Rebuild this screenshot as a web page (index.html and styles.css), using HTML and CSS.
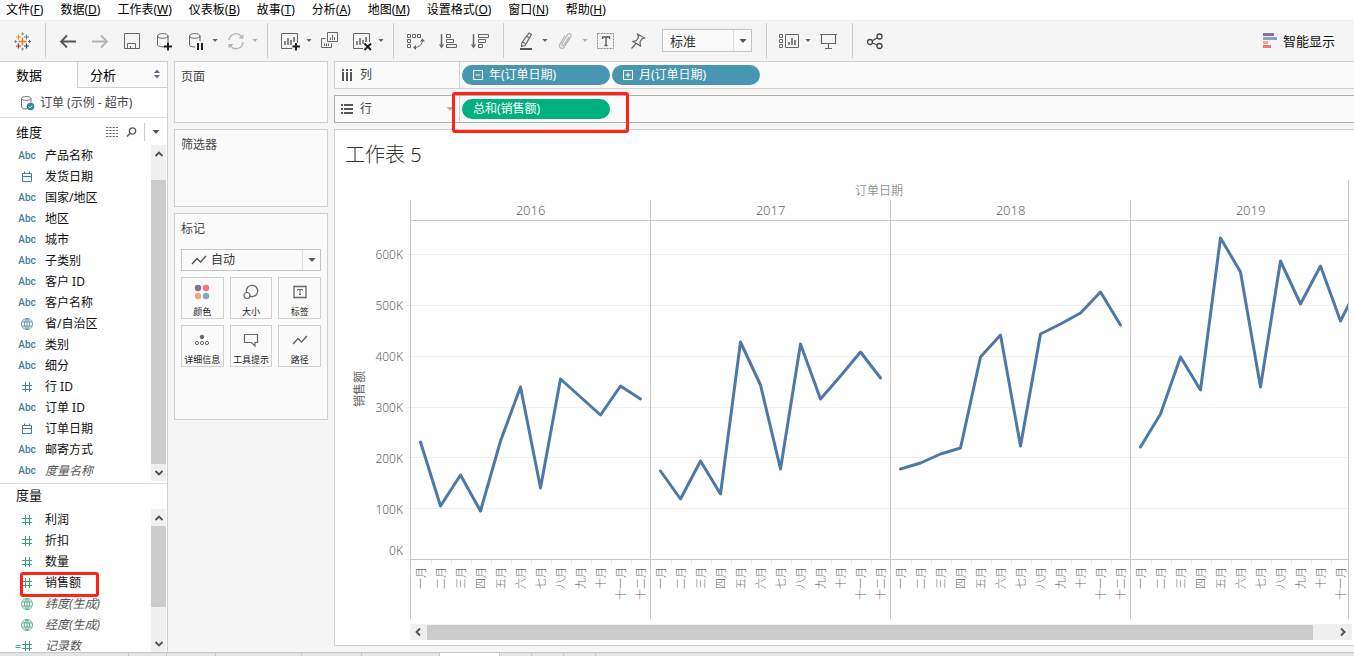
FILE: index.html
```html
<!DOCTYPE html>
<html lang="zh-CN">
<head>
<meta charset="utf-8">
<title>工作表 5</title>
<link rel="stylesheet" href="styles.css">
</head>
<body>
<svg class="defs" aria-hidden="true">
  <symbol id="cal" viewBox="0 0 14 14"><path d="M2.5 3.5h9v8h-9zM2.5 6.5h9M4.500 1.500v2M9.500 1.500v2" fill="none" stroke="currentColor"/></symbol>
  <symbol id="hash" viewBox="0 0 14 14"><path d="M5.500 2v10M9.500 2v10M2 5.500h10M2 9.500h10" fill="none" stroke="currentColor"/></symbol>
  <symbol id="globe" viewBox="0 0 14 14"><path d="M7 1.500a5.500 5.500 0 1 0 .01 0zM7 1.500c-3.500 3-3.500 8 0 11M7 1.500c3.500 3 3.500 8 0 11M7 1.500v11M2 5h10M2 9h10" fill="none" stroke="currentColor" stroke-width=".8"/></symbol>
  <symbol id="trend" viewBox="0 0 16 12"><path d="M1 10l5-5.500 3.500 3.500L15 2" fill="none" stroke="currentColor" stroke-width="1.400"/></symbol>
  <symbol id="up" viewBox="0 0 10 8"><path d="M1.500 6L5 2.500 8.500 6" fill="none" stroke="#505050" stroke-width="1.800"/></symbol>
  <symbol id="down" viewBox="0 0 10 8"><path d="M1.500 2L5 5.500 8.500 2" fill="none" stroke="#505050" stroke-width="1.800"/></symbol>
  <symbol id="caret" viewBox="0 0 8 6"><path d="M.5 1h7L4 5z" fill="currentColor"/></symbol>
</svg>

<nav class="menubar">
  <button>文件(<u>F</u>)</button><button>数据(<u>D</u>)</button><button>工作表(<u>W</u>)</button><button>仪表板(<u>B</u>)</button><button>故事(<u>T</u>)</button><button>分析(<u>A</u>)</button><button>地图(<u>M</u>)</button><button>设置格式(<u>O</u>)</button><button>窗口(<u>N</u>)</button><button>帮助(<u>H</u>)</button>
</nav>

<div class="toolbar" role="toolbar">
  <div class="group brand">
    <button class="tool" aria-label="起始页"><svg viewBox="0 0 20 20" fill="none">
      <path d="M10.500 6.500v8M6.500 10.500h8" stroke="#e8762d" stroke-width="1.500"/>
      <path d="M6.500 3.500v5M4 6h5" stroke="#eb9129" stroke-width="1.200"/><path d="M14.500 3.500v5M12 6h5" stroke="#5b879b" stroke-width="1.200"/>
      <path d="M6.500 12.500v5M4 15h5" stroke="#c72035" stroke-width="1.200"/><path d="M14.500 12.500v5M12 15h5" stroke="#1f447e" stroke-width="1.200"/>
      <path d="M10.500 1.500v3M9 3h3M10.500 16.500v3M9 18h3M3.500 9v3M2 10.500h3" stroke="#7199a6"/><path d="M17.500 9v3M16 10.500h3" stroke="#5c6692"/>
    </svg></button>
  </div>
  <div class="group">
    <button class="tool" aria-label="撤消"><svg viewBox="0 0 20 20"><path d="M18 10.500H3M9 4.500l-6 6 6 6" fill="none" stroke="#555" stroke-width="1.800"/></svg></button>
    <button class="tool faded" aria-label="重做"><svg viewBox="0 0 20 20"><path d="M2 10.500h15M11 4.500l6 6-6 6" fill="none" stroke="currentColor" stroke-width="1.800"/></svg></button>
    <button class="tool" aria-label="保存"><svg viewBox="0 0 20 20"><path d="M2.500 2.500h15v15h-15zM5.500 17.500v-5h8v5M8.500 15v2.500" fill="none" stroke="currentColor"/></svg></button>
    <button class="tool" aria-label="新建数据源"><svg viewBox="0 0 20 20"><path d="M12 15.500c-3.500.8-8.500 0-8.500-1.500V5c0-3.200 10.500-3.200 10.500 0 0 3-10.500 3-10.500 0M14 5v6" fill="none" stroke="currentColor"/><path d="M14 11.500v8M10 15.500h8" stroke="#222" stroke-width="2"/></svg></button>
    <button class="tool" aria-label="暂停自动更新"><svg viewBox="0 0 20 20"><path d="M9 16c-3 0-5.500-.8-5.500-2V5c0-3.200 10.500-3.200 10.500 0 0 3-10.500 3-10.500 0M14 5v5" fill="none" stroke="currentColor"/><path d="M11 12h2v7h-2zM15 12h2v7h-2z" fill="#222"/></svg></button>
    <button class="drop" aria-label="更新选项"><svg><use href="#caret"/></svg></button>
    <button class="tool faded" aria-label="运行更新"><svg viewBox="0 0 20 20"><path d="M3 9a7 7 0 0 1 12.500-3.500M17 11a7 7 0 0 1-12.500 4" fill="none" stroke="currentColor" stroke-width="1.300"/><path d="M12.500 7.500h5V3zM7.500 13h-5v4.500z" fill="currentColor"/></svg></button>
    <button class="drop faded" aria-label="运行选项"><svg><use href="#caret"/></svg></button>
  </div>
  <div class="group">
    <button class="tool" aria-label="新建工作表"><svg viewBox="0 0 20 20"><path d="M12 17.500H1.500v-15h16V12" fill="none" stroke="currentColor"/><path d="M5 14v-4M8 14V7M11 14V9M14 11V6" stroke="currentColor" stroke-width="1.500"/><path d="M16 12v7.500M12.500 15.500h7.500" stroke="#222" stroke-width="2"/></svg></button>
    <button class="drop" aria-label="新建选项"><svg><use href="#caret"/></svg></button>
    <button class="tool" aria-label="复制"><svg viewBox="0 0 20 20"><path d="M7.500 1.500h10v9h-10zM5.500 7.500h-4v9h10v-4" fill="none" stroke="currentColor"/><path d="M10.500 9V6.500M12.500 9V4M14.500 9V6M4.500 15v-2.500M6.500 15v-2.500M8.500 15v-2.500" stroke="currentColor"/></svg></button>
    <button class="tool" aria-label="清除工作表"><svg viewBox="0 0 20 20"><path d="M11 17.500H1.500v-15h16V11" fill="none" stroke="currentColor"/><path d="M5 14v-4M8 14V7M11 13V9M14 11V6" stroke="currentColor" stroke-width="1.500"/><path d="M12.500 12.500l6.500 6.500M19 12.500L12.500 19" stroke="#222" stroke-width="2"/></svg></button>
    <button class="drop" aria-label="清除选项"><svg><use href="#caret"/></svg></button>
  </div>
  <div class="group">
    <button class="tool" aria-label="交换行和列"><svg viewBox="0 0 20 20"><path d="M1.500 3.500h3v3h-3zM6.500 3.500h3v3h-3zM11.500 3.500h3v3h-3zM1.500 8.500h3v3h-3zM1.500 13.500h3v3h-3zM16.500 9c0 4-3 7.500-8 7.500" fill="none" stroke="currentColor"/><path d="M14 10.500l2.500-3 2.500 3zM10 14v5l-3-2.500z" fill="currentColor"/></svg></button>
    <button class="tool" aria-label="升序"><svg viewBox="0 0 20 20"><path d="M3.500 3v12" stroke="currentColor" stroke-width="1.500"/><path d="M1 13.500h5l-2.500 4z" fill="currentColor"/><path d="M8.500 3.500h4v3h-4zM8.500 8.500h7v3h-7zM8.500 13.500h10v3h-10z" fill="none" stroke="currentColor"/></svg></button>
    <button class="tool" aria-label="降序"><svg viewBox="0 0 20 20"><path d="M3.500 3v12" stroke="currentColor" stroke-width="1.500"/><path d="M1 13.500h5l-2.500 4z" fill="currentColor"/><path d="M8.500 3.500h10v3h-10zM8.500 8.500h7v3h-7zM8.500 13.500h4v3h-4z" fill="none" stroke="currentColor"/></svg></button>
  </div>
  <div class="group wide">
    <button class="tool" aria-label="突出显示"><svg viewBox="0 0 20 20"><path d="M13 2l2.500 1.500-6.500 11-3.500 1 .5-4zM6.500 11l2.800 1.500M11 5.500l2.500 1.500" fill="none" stroke="currentColor" stroke-width="1.200"/><path d="M4 18h12" stroke="#555" stroke-width="2"/></svg></button>
    <button class="drop" aria-label="突出显示选项"><svg><use href="#caret"/></svg></button>
    <button class="tool faded" aria-label="分组"><svg viewBox="0 0 20 20"><path d="M13 6l-5 8c-1 1.500-3 .5-2-1.200L11.500 3.800c1.500-2.200 4.500-.5 3.200 1.800L8.500 15.800c-2 3-6.500.8-4.600-2.600L9 4.500" fill="none" stroke="currentColor" stroke-width="1.200"/></svg></button>
    <button class="drop faded" aria-label="分组选项"><svg><use href="#caret"/></svg></button>
    <button class="tool" aria-label="显示标记标签"><svg viewBox="0 0 20 20"><path d="M1.500 2.500h16v15h-16z" fill="none" stroke="#888" stroke-dasharray="2 1"/><path d="M6.500 8V6h7v2M10 6v8M8.500 14.500h3" fill="none" stroke="#555" stroke-width="1.300"/></svg></button>
    <button class="tool" aria-label="固定轴"><svg viewBox="0 0 20 20"><path d="M9.500 3l7 4-2.500.8-2 3.200.5 4-7.500-4.500 3.500-1 2-3.500zM8 12.500l-4.500 5" fill="none" stroke="currentColor" stroke-width="1.200"/></svg></button>
    <div class="combo fit"><select aria-label="适合"><option>标准</option></select><span class="combo-arrow"><svg><use href="#caret"/></svg></span></div>
  </div>
  <div class="group">
    <button class="tool" aria-label="显示/隐藏卡"><svg viewBox="0 0 20 20"><path d="M.5 3.500h3v3h-3zM.5 8.500h3v3h-3zM.5 13.500h3v3h-3zM6.500 3.500h13v13h-13z" fill="none" stroke="currentColor"/><path d="M10 14v-3M13 14V7M16 14V9" stroke="currentColor" stroke-width="1.600"/></svg></button>
    <button class="drop" aria-label="卡选项"><svg><use href="#caret"/></svg></button>
    <button class="tool" aria-label="演示模式"><svg viewBox="0 0 20 20"><path d="M1 3.500h17M2.500 3.500v9h14v-9M9.500 12.500v5M6 17.500h7" fill="none" stroke="currentColor" stroke-width="1.200"/></svg></button>
  </div>
  <div class="group last">
    <button class="tool" aria-label="共享"><svg viewBox="0 0 20 20" fill="none" stroke="#444" stroke-width="1.300"><circle cx="5" cy="11" r="2.500"/><circle cx="14.500" cy="5.500" r="2.500"/><circle cx="14.500" cy="15" r="2.500"/><path d="M7.300 9.800l5-3M7.300 12l5 2"/></svg></button>
  </div>
  <button class="showme"><svg viewBox="0 0 14 16"><path d="M0 0h11v3H0z" fill="#8a7099"/><path d="M0 4h14v3H0z" fill="#83a6cc"/><path d="M0 8h5v3H0z" fill="#f5a67d"/><path d="M0 12h8v3H0z" fill="#fa6e82"/></svg>智能显示</button>
</div>

<main class="workspace">
  <aside class="sidebar">
    <div class="side-tabs">
      <button class="side-tab active">数据</button>
      <button class="side-tab">分析<svg viewBox="0 0 8 10"><path d="M1 4l3-3.500L7 4zM1 6l3 3.500L7 6z" fill="#5f6b7a"/></svg></button>
    </div>
    <div class="source"><svg viewBox="0 0 16 16"><path d="M7 14c-2.800 0-5.500-.6-5.500-2V3.500c0-2.700 9.500-2.700 9.500 0 0 2.500-9.500 2.500-9.500 0M11 3.500v4" fill="none" stroke="#777"/><circle cx="10.500" cy="11.500" r="3.800" fill="#3680a4"/><path d="M8.800 11.500l1.300 1.300 2.200-2.400" fill="none" stroke="#fff"/></svg>订单 (示例 - 超市)</div>
    <div class="section-head">
      <h2>维度</h2>
      <svg class="grid-icon" viewBox="0 0 12 10"><path d="M0 .5h12M0 3.500h12M0 6.500h12M0 9.500h12" stroke="#666" stroke-dasharray="2.300 1"/></svg>
      <svg class="find-icon" viewBox="0 0 12 10"><circle cx="6.500" cy="4" r="3.200" fill="none" stroke="#555" stroke-width="1.200"/><path d="M4 6.500L1 9.500" stroke="#555" stroke-width="1.500"/></svg>
      <button class="section-menu" aria-label="维度菜单"><svg><use href="#caret"/></svg></button>
    </div>
    <div class="field-pane dims">
      <ul class="fields">
        <li><b>Abc</b>产品名称</li>
        <li><svg><use href="#cal"/></svg>发货日期</li>
        <li><b>Abc</b>国家/地区</li>
        <li><b>Abc</b>地区</li>
        <li><b>Abc</b>城市</li>
        <li><b>Abc</b>子类别</li>
        <li><b>Abc</b>客户 ID</li>
        <li><b>Abc</b>客户名称</li>
        <li><svg><use href="#globe"/></svg>省/自治区</li>
        <li><b>Abc</b>类别</li>
        <li><b>Abc</b>细分</li>
        <li><svg><use href="#hash"/></svg>行 ID</li>
        <li><b>Abc</b>订单 ID</li>
        <li><svg><use href="#cal"/></svg>订单日期</li>
        <li><b>Abc</b>邮寄方式</li>
        <li class="generated"><b>Abc</b><i>度量名称</i></li>
      </ul>
      <div class="vscroll"><svg><use href="#up"/></svg><span class="thumb"></span><svg><use href="#down"/></svg></div>
    </div>
    <div class="section-head measure-head"><h2>度量</h2></div>
    <div class="field-pane measures">
      <ul class="fields">
        <li><svg><use href="#hash"/></svg>利润</li>
        <li><svg><use href="#hash"/></svg>折扣</li>
        <li><svg><use href="#hash"/></svg>数量</li>
        <li class="marked"><svg><use href="#hash"/></svg>销售额</li>
        <li class="generated"><svg><use href="#globe"/></svg><i>纬度(生成)</i></li>
        <li class="generated"><svg><use href="#globe"/></svg><i>经度(生成)</i></li>
        <li class="generated calc"><svg><use href="#hash"/></svg><i>记录数</i></li>
      </ul>
      <div class="vscroll"><svg><use href="#up"/></svg><span class="thumb"></span><svg><use href="#down"/></svg></div>
    </div>
  </aside>

  <section class="cards">
    <div class="card pages"><h3>页面</h3></div>
    <div class="card filters"><h3>筛选器</h3></div>
    <div class="card marks">
      <h3>标记</h3>
      <div class="combo mark-type"><svg class="lead"><use href="#trend"/></svg><select aria-label="标记类型"><option>自动</option></select><span class="combo-arrow"><svg><use href="#caret"/></svg></span></div>
      <div class="mark-grid">
        <button><svg viewBox="0 0 16 16"><circle cx="4" cy="4" r="3.200" fill="#8a7099"/><circle cx="12" cy="4" r="3.200" fill="#fa6e82"/><circle cx="4" cy="12" r="3.200" fill="#f5a67d"/><circle cx="12" cy="12" r="3.200" fill="#83a6cc"/></svg>颜色</button>
        <button><svg viewBox="0 0 16 16" fill="#fafafa" stroke="#666" stroke-width="1.200"><circle cx="9" cy="7" r="5.700"/><circle cx="4" cy="11.500" r="3"/></svg>大小</button>
        <button><svg viewBox="0 0 16 16" fill="none" stroke="#666"><path d="M2 2.500h12v11H2z" stroke-width="1.300"/><path d="M5.500 6.500v-1h5v1M8 5.500v5M7 10.500h2"/></svg>标签</button>
        <button><svg viewBox="0 0 16 16" fill="none" stroke="#666"><circle cx="8" cy="5" r="1.800" fill="#666"/><circle cx="3" cy="11" r="1.600"/><circle cx="8" cy="11" r="1.600"/><circle cx="13" cy="11" r="1.600"/></svg>详细信息</button>
        <button><svg viewBox="0 0 16 16"><path d="M1.500 2.500h13v8h-2.500v3.500l-3.500-3.500h-7z" fill="none" stroke="#666" stroke-width="1.200"/></svg>工具提示</button>
        <button><svg><use href="#trend"/></svg>路径</button>
      </div>
    </div>
  </section>

  <section class="canvas">
    <div class="shelf">
      <div class="shelf-label"><svg viewBox="0 0 12 12"><path d="M2 0v2M6 0v2M10 0v2M2 3v9M6 3v9M10 3v9" stroke="#555" stroke-width="2"/></svg>列</div>
      <div class="pills">
        <button class="pill"><svg viewBox="0 0 10 10"><path d="M.5.5h9v9h-9zM2.500 5h5" fill="none" stroke="#fff"/></svg>年(订单日期)</button>
        <button class="pill"><svg viewBox="0 0 10 10"><path d="M.5.5h9v9h-9zM2.500 5h5M5 2.500v5" fill="none" stroke="#fff"/></svg>月(订单日期)</button>
      </div>
    </div>
    <div class="shelf rows">
      <div class="shelf-label"><svg viewBox="0 0 12 12"><path d="M0 2h2M0 6h2M0 10h2M3 2h9M3 6h9M3 10h9" stroke="#555" stroke-width="2"/></svg>行<svg class="shelf-caret"><use href="#caret"/></svg></div>
      <div class="pills marked"><button class="pill measure">总和(销售额)</button></div>
    </div>
    <div class="view">
      <h1>工作表 5</h1>
      <div class="chart">
        <div class="axis">
          <span class="axis-title">销售额</span>
          <div class="axis-labels"><span>600K</span><span>500K</span><span>400K</span><span>300K</span><span>200K</span><span>100K</span><span class="zero">0K</span></div>
          <svg class="axis-ticks" viewBox="0 0 4 339"><path d="M0 33.500h4M0 84.500h4M0 135.500h4M0 186.500h4M0 236.500h4M0 287.500h4M0 338.500h4" stroke="#ececec"/></svg>
        </div>
        <div class="plot">
          <div class="plot-title">订单日期</div>
          <div class="panes">
            <div class="pane">
              <div class="year">2016</div>
              <svg class="lines" viewBox="0 0 239 338"><path class="gl" d="M0 33.500h239M0 84.500h239M0 135.500h239M0 186.500h239M0 236.500h239M0 287.500h239"/><polyline points="9.500,221 29.500,285 49.500,254 69.500,290 89.500,220 109.500,166 129.500,267 149.500,158 169.500,176 189.500,194 209.500,165 229.500,178"/></svg>
              <div class="months"><span>一月</span><span>二月</span><span>三月</span><span>四月</span><span>五月</span><span>六月</span><span>七月</span><span>八月</span><span>九月</span><span>十月</span><span>十一月</span><span>十二月</span></div>
            </div>
            <div class="pane">
              <div class="year">2017</div>
              <svg class="lines" viewBox="0 0 239 338"><path class="gl" d="M0 33.500h239M0 84.500h239M0 135.500h239M0 186.500h239M0 236.500h239M0 287.500h239"/><polyline points="9.500,250 29.500,278 49.500,240 69.500,273 89.500,121 109.500,164 129.500,248 149.500,123 169.500,178 189.500,155 209.500,131 229.500,157"/></svg>
              <div class="months"><span>一月</span><span>二月</span><span>三月</span><span>四月</span><span>五月</span><span>六月</span><span>七月</span><span>八月</span><span>九月</span><span>十月</span><span>十一月</span><span>十二月</span></div>
            </div>
            <div class="pane">
              <div class="year">2018</div>
              <svg class="lines" viewBox="0 0 239 338"><path class="gl" d="M0 33.500h239M0 84.500h239M0 135.500h239M0 186.500h239M0 236.500h239M0 287.500h239"/><polyline points="9.500,248 29.500,242 49.500,233 69.500,227 89.500,136 109.500,114 129.500,225 149.500,113 169.500,103 189.500,92 209.500,71 229.500,104"/></svg>
              <div class="months"><span>一月</span><span>二月</span><span>三月</span><span>四月</span><span>五月</span><span>六月</span><span>七月</span><span>八月</span><span>九月</span><span>十月</span><span>十一月</span><span>十二月</span></div>
            </div>
            <div class="pane">
              <div class="year">2019</div>
              <svg class="lines" viewBox="0 0 239 338"><path class="gl" d="M0 33.500h239M0 84.500h239M0 135.500h239M0 186.500h239M0 236.500h239M0 287.500h239"/><polyline points="9.500,226 29.500,193 49.500,136 69.500,169 89.500,17 109.500,51 129.500,166 149.500,40 169.500,83 189.500,45 209.500,100 229.500,60"/></svg>
              <div class="months"><span>一月</span><span>二月</span><span>三月</span><span>四月</span><span>五月</span><span>六月</span><span>七月</span><span>八月</span><span>九月</span><span>十月</span><span>十一月</span></div>
            </div>
          </div>
        </div>
      </div>
      <div class="hscroll">
        <svg viewBox="0 0 8 10"><path d="M6 1.500L2.500 5 6 8.500" fill="none" stroke="#505050" stroke-width="1.800"/></svg><span class="thumb"></span><svg viewBox="0 0 8 10"><path d="M2 1.500L5.500 5 2 8.500" fill="none" stroke="#505050" stroke-width="1.800"/></svg>
      </div>
    </div>
  </section>
</main>

<footer class="sheet-tabs"><span class="t1"></span><span class="t2"></span><span class="t3"></span><span class="t4"></span><span class="t5"></span><span class="t6"></span><span class="t5 current"></span><span class="t7"></span><span class="t7"></span><span class="t7"></span></footer>
</body>
</html>
```

FILE: styles.css
```css
*, *::before, *::after { box-sizing: border-box; }
body {
  margin: 0;
  height: 100vh;
  display: flex;
  flex-direction: column;
  overflow: hidden;
  background: #f5f5f5;
  color: #222;
  font: 12px/20px "Noto Sans", "Noto Sans CJK SC", sans-serif;
}
button, select {
  font: inherit;
  color: inherit;
  background: none;
  border: 0;
  padding: 0;
  margin: 0;
}
h1, h2, h3, ul { margin: 0; padding: 0; font-weight: 400; }
svg { display: block; flex: none; }
.defs { position: absolute; width: 0; height: 0; }

/* menu */
.menubar {
  flex: none;
  display: flex;
  gap: 17px;
  height: 20px;
  padding-left: 6px;
  background: #fff;
  color: #000;
}
.menubar button { white-space: nowrap; }

/* toolbar */
.toolbar {
  flex: none;
  display: flex;
  align-items: stretch;
  height: 41px;
  padding: 2px 0 3px;
  border-top: 1px solid #eee;
  color: #666;
}
.group {
  display: flex;
  align-items: center;
  padding: 0 7px 0 6px;
  border-right: 1px solid #ccc;
}
.group.wide { padding-right: 14px; }
.group.last { border: 0; }
.tool { width: 32px; height: 32px; display: grid; place-items: center; }
.tool svg { width: 20px; height: 20px; }
.drop { width: 10px; height: 32px; margin-left: -2px; display: grid; place-items: center; }
.drop svg { width: 6px; height: 5px; }
.faded { color: #b5b5b5; }
.combo {
  display: flex;
  align-items: stretch;
  border: 1px solid #c4c4c4;
  background: #fafafa;
  color: #333;
}
.combo select { flex: 1; min-width: 0; appearance: none; outline: 0; }
.combo-arrow {
  width: 18px;
  display: grid;
  place-items: center;
  border-left: 1px solid #ddd;
  color: #555;
}
.combo-arrow svg { width: 8px; height: 6px; }
.fit { width: 90px; height: 23px; margin-left: 8px; padding-left: 7px; font-size: 13px; }
.showme {
  margin-left: auto;
  padding-right: 19px;
  display: flex;
  align-items: center;
  gap: 6px;
  font-size: 13px;
  color: #111;
}
.showme svg { width: 14px; height: 16px; }

/* workspace */
.workspace { flex: 1; min-height: 0; display: flex; }
.sidebar {
  flex: none;
  width: 168px;
  display: flex;
  flex-direction: column;
  background: #fff;
  border: 1px solid #d0d0d0;
  border-width: 1px 1px 0 0;
}
.side-tabs { display: flex; flex: none; height: 26px; font-size: 13px; color: #000; }
.side-tab {
  flex: 1;
  display: flex;
  align-items: center;
  justify-content: space-between;
  padding: 0 6px 0 12px;
  background: #fafafa;
  border: 1px solid #d0d0d0;
  border-width: 0 0 1px 1px;
}
.side-tab.active { flex: none; width: 77px; padding-left: 16px; background: #fff; border: 0; }
.side-tab svg { width: 8px; height: 10px; margin-bottom: 2px; }
.source {
  flex: none;
  height: 30px;
  display: flex;
  align-items: center;
  gap: 4px;
  padding-left: 20px;
  border-bottom: 1px solid #ddd;
  color: #444;
  white-space: nowrap;
}
.source svg { width: 16px; height: 16px; }
.section-head { flex: none; height: 27px; display: flex; align-items: center; padding-left: 16px; }
.section-head h2 { flex: 1; font-size: 13px; line-height: 20px; color: #111; }
.grid-icon { width: 12px; height: 10px; margin-right: 8px; }
.find-icon { width: 12px; height: 10px; margin-right: 6px; }
.section-menu { width: 23px; height: 18px; border-left: 1px solid #ccc; display: grid; place-items: center; color: #555; }
.section-menu svg { width: 8px; height: 6px; }
.measure-head { height: 26px; padding-bottom: 3px; border-top: 1px solid #ddd; }
.field-pane { display: flex; overflow: hidden; }
.dims { flex: none; height: 338px; padding-bottom: 2px; }
.measures { flex: 1; min-height: 0; }
.fields { flex: 1; list-style: none; }
.fields li {
  position: relative;
  height: 21px;
  display: flex;
  align-items: center;
  gap: 9px;
  padding-left: 18px;
  white-space: nowrap;
  color: #111;
}
.fields b { width: 18px; text-align: center; font: 500 10px/20px Roboto, sans-serif; color: #3d7f9c; }
.fields svg { width: 14px; height: 14px; margin: 0 2px; }
.dims .fields svg { color: #3d7f9c; }
.measures .fields svg { color: #3ba17c; }
.fields i { color: #555; }
.calc::before { content: "="; position: absolute; left: 15px; color: #3ba17c; font-size: 10px; }
.vscroll {
  width: 15px;
  margin-right: 1px;
  display: flex;
  flex-direction: column;
  align-items: stretch;
  justify-content: space-between;
  background: #f0f0f0;
}
.vscroll svg { width: 10px; height: 8px; margin: 5px auto 4px 3px; }
.vscroll .thumb { flex: 1; background: #ccc; margin-top: 18px; }
.measures .thumb { flex: none; height: 81px; margin: 0 0 auto; }

/* red outlines */
.marked::after {
  content: "";
  position: absolute;
  border: 3px solid #ff2215;
  border-radius: 3px;
  pointer-events: none;
  z-index: 1;
}
.pills.marked { position: relative; }
.fields .marked::after { left: 20px; top: 0; width: 79px; height: 25px; }
.pills.marked::after { left: -8px; top: -4px; width: 177px; height: 41px; }

/* cards */
.cards {
  flex: none;
  width: 166px;
  padding: 0 6px;
  display: flex;
  flex-direction: column;
  gap: 6px;
}
.card { padding: 5px 6px; background: #fafafa; border: 1px solid #d0d0d0; }
.card h3 { font-size: 12px; line-height: 20px; color: #444; }
.pages { height: 62px; }
.filters { height: 78px; }
.marks { height: 207px; }
.mark-type { height: 22px; margin: 10px 0 6px; align-items: center; }
.mark-type .lead { width: 16px; height: 12px; margin: 0 4px 0 9px; color: #555; }
.mark-type .combo-arrow { align-self: stretch; }
.mark-grid { display: grid; grid-template-columns: repeat(3, 1fr); gap: 6px; }
.mark-grid button {
  height: 42px;
  display: flex;
  flex-direction: column;
  align-items: center;
  gap: 4px;
  padding-top: 6px;
  border: 1px solid #d0d0d0;
  font-size: 9px;
  line-height: 16px;
  white-space: nowrap;
  color: #222;
}
.mark-grid svg { width: 16px; height: 16px; color: #666; }

/* shelves and view */
.canvas { flex: 1; min-width: 0; display: flex; flex-direction: column; gap: 6px; }
.shelf {
  flex: none;
  height: 28px;
  display: flex;
  background: #fafafa;
  border: 1px solid #d0d0d0;
  border-right: 0;
}
.shelf.rows { border-color: #b0b0b0; }
.shelf-label {
  width: 125px;
  display: flex;
  align-items: center;
  gap: 7px;
  padding-left: 6px;
  border-right: 1px solid #d0d0d0;
  color: #444;
}
.shelf-label svg { width: 12px; height: 12px; }
.shelf-label .shelf-caret { width: 8px; height: 6px; margin-left: auto; margin-right: 5px; color: #b5b5b5; }
.pills { flex: 1; display: flex; align-items: center; gap: 2px; padding-left: 2px; }
.pill {
  width: 148px;
  height: 20px;
  display: flex;
  align-items: center;
  gap: 6px;
  padding: 0 11px;
  border-radius: 10px;
  background: #4996b2;
  color: #fff;
}
.pill svg { width: 10px; height: 10px; }
.pill.measure { background: #00b180; }
.view {
  flex: none;
  height: 517px;
  padding: 10px 0 4px;
  background: #fff;
  border: 1px solid #d0d0d0;
  border-right: 0;
}
.view h1 { height: 40px; padding-left: 10px; font-size: 20px; line-height: 30px; font-weight: 300; color: #333; }
.chart { display: flex; margin-right: 5px; color: #666; }
.axis { flex: none; width: 75px; display: flex; padding-top: 41px; }
.axis-title {
  width: 20px;
  height: 335px;
  margin-left: 15px;
  writing-mode: vertical-rl;
  text-orientation: sideways;
  text-align: center;
  transform: rotate(180deg);
}
.axis-labels { width: 33px; height: 339px; padding-top: 9px; display: flex; flex-direction: column; text-align: right; }
.axis-labels span { flex: 1; display: grid; align-items: center; font-weight: 300; }
.axis-labels .zero { flex: none; height: 25px; padding-bottom: 1px; align-items: end; line-height: 16px; }
.axis-ticks { width: 4px; height: 339px; margin-left: 3px; }
.plot { flex: 1; min-width: 0; border-right: 1px solid #c8c8c8; }
.plot-title { height: 20px; line-height: 22px; text-align: center; font-weight: 300; }
.panes { display: flex; overflow: hidden; }
.pane { flex: none; width: 240px; border-left: 1px solid #c8c8c8; }
.year { height: 21px; border-bottom: 1px solid #c8c8c8; text-align: center; font-size: 13px; font-weight: 300; }
.lines { width: 239px; height: 338px; }
.lines .gl { stroke: #f0f0f0; }
.lines polyline { fill: none; stroke: #4e79a7; stroke-width: 3; stroke-linejoin: round; stroke-linecap: round; }
.months { height: 60px; display: grid; grid-template-columns: repeat(12, 1fr); align-items: start; border-top: 1px solid #c8c8c8; }
.months span {
  width: 20px;
  padding-bottom: 7px;
  writing-mode: vertical-rl;
  text-orientation: sideways;
  transform: rotate(180deg);
  font-size: 11px;
  line-height: 20px;
  font-weight: 300;
}
.months span + span { background: linear-gradient(#e8e8e8, #e8e8e8) right bottom / 1px 4px no-repeat; }
.hscroll { display: flex; align-items: center; height: 16px; margin: 5px 2px 0 75px; background: #f0f0f0; }
.hscroll svg { width: 8px; height: 10px; margin: 0 5px 0 4px; }
.hscroll .thumb { flex: 1; height: 15px; background: #ccc; margin-right: 22px; }

/* sheet tab strip */
.sheet-tabs { flex: none; height: 4px; display: flex; background: #e4e4e4; border-top: 1px solid #c8c8c8; }
.sheet-tabs span { border-right: 1px solid #c8c8c8; }
.sheet-tabs .current { background: #fff; }
.t1 { width: 129px; }
.t2 { width: 38px; }
.t3 { width: 49px; }
.t4 { width: 86px; }
.t5 { width: 60px; }
.t6 { width: 78px; }
.t7 { width: 32px; }
```
